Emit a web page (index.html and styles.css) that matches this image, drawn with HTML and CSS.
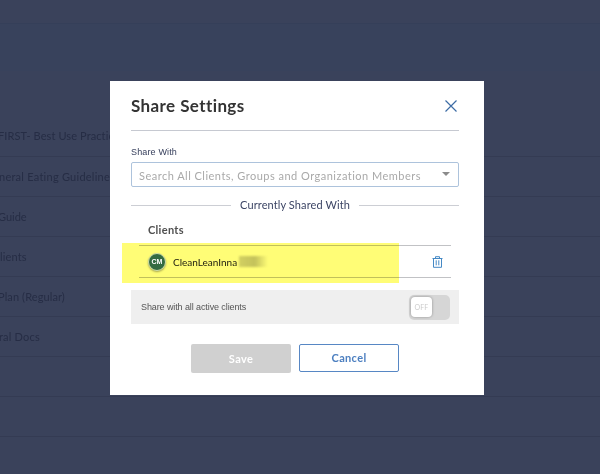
FILE: index.html
```html
<!DOCTYPE html>
<html lang="en">
<head>
<meta charset="utf-8">
<title>Share Settings</title>
<link rel="stylesheet" href="styles.css">
</head>
<body>
<main class="page">
  <div class="band"></div>
  <div class="row first"><span class="doc d1">FIRST- Best Use Practic</span></div>
  <div class="row"><span class="doc d2">neral Eating Guideline</span></div>
  <div class="row"><span class="doc d3">Guide</span></div>
  <div class="row"><span class="doc d4">lients</span></div>
  <div class="row"><span class="doc d5">Plan (Regular)</span></div>
  <div class="row"><span class="doc d6">ral Docs</span></div>
  <div class="row"></div>
  <div class="row"></div>
</main>
<section class="modal">
  <header class="head">
    <h1 class="title">Share Settings</h1>
    <svg class="close" width="12" height="12" viewBox="0 0 12 12"><path d="M.5.5l11 11M11.5.5l-11 11"/></svg>
  </header>
  <div class="label"><span>Share With</span></div>
  <div class="search"><span class="placeholder">Search All Clients, Groups and Organization Members</span><i class="caret"></i></div>
  <div class="legend"><span>Currently Shared With</span></div>
  <div class="group">
    <h2 class="group-title">Clients</h2>
    <div class="client">
      <span class="avatar">CM</span>
      <span class="name">CleanLeanInna</span>
      <span class="redacted"></span>
      <svg class="trash" width="11" height="12" viewBox="0 0 11 12"><path d="M.5 2.5h10M3.5 2.3V.7h4v1.6M1.5 2.5v8.8h8V2.5M4.2 4.3v5M6.8 4.3v5"/></svg>
    </div>
    <div class="highlight"></div>
  </div>
  <div class="all">
    <span class="all-text">Share with all active clients</span>
    <div class="toggle"><span class="knob"><b>OFF</b></span></div>
  </div>
  <div class="actions">
    <button class="btn save">Save</button>
    <button class="btn cancel">Cancel</button>
  </div>
</section>
</body>
</html>
```
FILE: styles.css
```css
* { box-sizing: border-box; }
body {
  margin: 0;
  height: 474px;
  overflow: hidden;
  background: #3a425b;
  font-family: Lato, "Liberation Sans", sans-serif;
}
.page { padding-top: 23px; }
.band { height: 48px; background: #38425c; border-top: 1px solid #353f59; }
.row {
  height: 40px;
  border-bottom: 1px solid #343b53;
  display: flex;
  align-items: center;
  white-space: nowrap;
}
.row.first { height: 46px; margin-top: 40px; padding-top: 5px; }
.doc { font-size: 11px; color: #262d45; line-height: 16px; }
.d1 { margin-left: -2px; letter-spacing: .1px; }
.d2 { margin-left: -1px; letter-spacing: .25px; }
.d3 { margin-left: -2px; }
.d4 { letter-spacing: .15px; }
.d5 { margin-left: -2px; letter-spacing: .1px; }
.d6 { margin-left: -1px; letter-spacing: .2px; }

.modal {
  position: absolute;
  left: 110px;
  top: 81px;
  width: 374px;
  height: 314px;
  padding: 0 25px 0 21px;
  background: #fff;
}
.head {
  height: 50px;
  border-bottom: 1px solid #c6c9d1;
  display: flex;
  align-items: center;
  justify-content: space-between;
  padding-right: 2px;
}
.title { margin: 0; font-size: 17px; line-height: 20px; font-weight: 700; color: #333; letter-spacing: .4px; white-space: nowrap; }
.close { fill: none; stroke: #3d6ca5; stroke-width: 1.2; }
.label { height: 31px; padding-top: 14px; font: 9px/14px "Liberation Sans", sans-serif; color: #38405d; letter-spacing: .15px; }
.search {
  height: 25px;
  border: 1px solid #adc3dc;
  border-radius: 2px;
  display: flex;
  align-items: center;
  justify-content: space-between;
  padding: 3px 8px 0 7px;
}
.placeholder { font-size: 11px; line-height: 16px; color: #a9a9a9; letter-spacing: .48px; white-space: nowrap; }
.caret { border: 4px solid transparent; border-top-color: #8b8b8b; border-bottom: 0; margin-top: -4px; }
.legend {
  height: 36px;
  display: flex;
  align-items: center;
  gap: 9px;
  font-size: 11px;
  line-height: 16px;
  letter-spacing: .1px;
  color: #3c4565;
  white-space: nowrap;
}
.legend::before, .legend::after { content: ""; flex: 1; height: 1px; background: #ccced4; }
.group { position: relative; padding: 0 8px; }
.group-title { margin: 0; height: 22px; padding: 0 0 0 9px; font-size: 11px; line-height: 14px; font-weight: 700; color: #505050; letter-spacing: .3px; }
.client {
  height: 33px;
  border-top: 1px solid #c1c2c5;
  border-bottom: 1px solid #c1c2c5;
  display: flex;
  align-items: center;
  padding: 0 9px;
}
.avatar {
  position: relative;
  z-index: 1;
  width: 18px;
  height: 18px;
  border-radius: 50%;
  border: 1px solid #d0e0a8;
  background: #346b42;
  color: #fff;
  font: 700 7px/16px "Liberation Sans", sans-serif;
  text-align: center;
  box-shadow: 0 1px 2px rgba(0,0,0,.35);
}
.name { margin-left: 7px; font-size: 10px; line-height: 14px; color: #222; white-space: nowrap; }
.redacted { width: 29px; height: 11px; margin-left: 2px; background: linear-gradient(90deg, #d2d2d2, #c4c4c4 55%, #fff); filter: blur(1px); }
.trash { margin-left: auto; margin-right: -1px; fill: none; stroke: #4589c5; stroke-width: 1; }
.highlight {
  position: absolute;
  left: -9px;
  top: 20px;
  width: 277px;
  height: 40px;
  background: #fffd76;
  mix-blend-mode: multiply;
}
.all {
  height: 34px;
  margin-top: 12px;
  padding: 0 9px 0 10px;
  background: #efefef;
  display: flex;
  align-items: center;
  justify-content: space-between;
}
.all-text { font: 9px/14px "Liberation Sans", sans-serif; color: #555; letter-spacing: -.1px; white-space: nowrap; }
.toggle { width: 41px; height: 25px; padding: 2px; border-radius: 5px; background: #d6d6d6; }
.knob {
  display: block;
  width: 21px;
  height: 20px;
  border-radius: 4px;
  background: #fff;
  color: #ccc;
  font-size: 7px;
  line-height: 21px;
  text-align: center;
  box-shadow: 0 0 2px 1px #b4b4b4;
}
.knob b { font-weight: 400; letter-spacing: .1px; }
.actions { display: flex; gap: 8px; margin: 20px 0 0 60px; }
.btn { width: 100px; height: 29px; border: 0; border-radius: 2px; padding: 0; font: 700 11px/28px Lato, sans-serif; letter-spacing: .35px; }
.save { background: #d0d0d0; color: #fff; }
.cancel { height: 28px; border: 1px solid #5787c4; background: #fff; color: #4c7fc0; line-height: 26px; }
```
